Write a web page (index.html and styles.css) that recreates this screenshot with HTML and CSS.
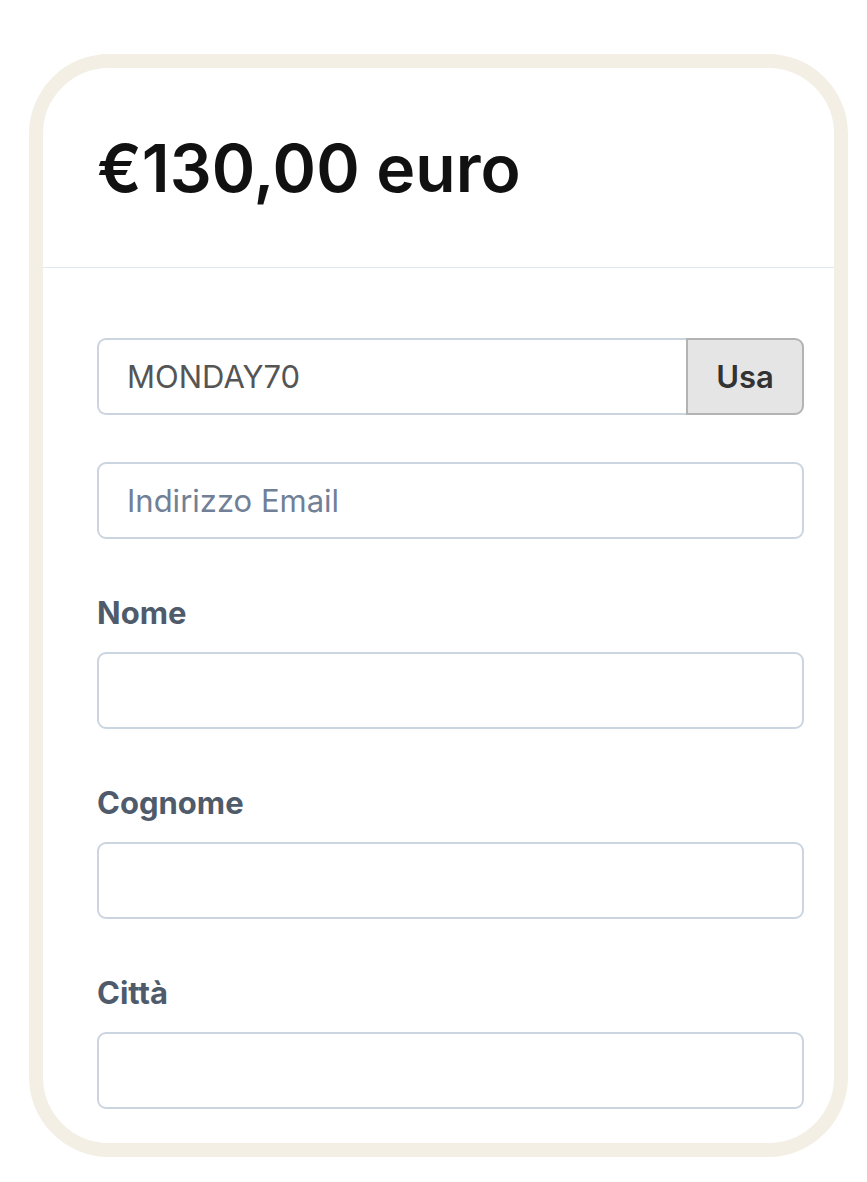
FILE: index.html
```html
<!DOCTYPE html>
<html lang="it">
<head>
<meta charset="utf-8">
<title>Pagamento</title>
<link rel="stylesheet" href="styles.css">
</head>
<body>
<div class="card">
  <div class="card-header">
    <h1 class="price">€130,00 euro</h1>
  </div>
  <div class="card-body">
    <div class="coupon">
      <input class="input coupon-input" type="text" value="MONDAY70">
      <button class="coupon-btn" type="button">Usa</button>
    </div>
    <input class="input email" type="email" placeholder="Indirizzo Email">
    <div class="field">
      <label class="label">Nome</label>
      <input class="input" type="text">
    </div>
    <div class="field">
      <label class="label">Cognome</label>
      <input class="input" type="text">
    </div>
    <div class="field">
      <label class="label">Città</label>
      <input class="input" type="text">
    </div>
  </div>
</div>
</body>
</html>
```
FILE: styles.css
```css
html, body {
  margin: 0;
  padding: 0;
  background: #ffffff;
}
body {
  font-family: Inter, "Liberation Sans", Arial, sans-serif;
  padding: 54px 0 0 29px;
}
.card {
  width: 819px;
  box-sizing: border-box;
  border: 14px solid #f3efe5;
  border-radius: 80px;
  background: #ffffff;
  overflow: hidden;
}
.card-header {
  height: 199px;
  border-bottom: 1px solid #e3e8ee;
  display: flex;
  align-items: center;
  padding-left: 54px;
  box-sizing: content-box;
}
.price {
  margin: 0;
  font-family: Inter, "Liberation Sans", Arial, sans-serif;
  font-size: 66px;
  line-height: 1;
  font-weight: 600;
  color: #111111;
  letter-spacing: 0;
}
.card-body {
  padding: 70px 30px 34px 54px;
  display: flex;
  flex-direction: column;
}
.input {
  display: block;
  box-sizing: border-box;
  width: 100%;
  height: 77px;
  margin: 0;
  padding: 0 28px;
  border: 2px solid #cbd5e0;
  border-radius: 9px;
  background: #ffffff;
  font-family: Inter, "Liberation Sans", Arial, sans-serif;
  font-size: 31px;
  color: #555555;
  outline: none;
}
.input::placeholder {
  color: #718096;
}
.coupon {
  display: flex;
}
.coupon-input {
  flex: 1;
  border-radius: 9px 0 0 9px;
  border-right: none;
}
.coupon-btn {
  width: 118px;
  height: 77px;
  box-sizing: border-box;
  border: 2px solid #b3b3b3;
  border-radius: 0 9px 9px 0;
  background: #e5e5e5;
  font-family: Inter, "Liberation Sans", Arial, sans-serif;
  font-size: 31px;
  font-weight: 600;
  color: #333333;
  padding: 0;
}
.email {
  margin-top: 47px;
}
.field {
  margin-top: 56px;
  display: flex;
  flex-direction: column;
}
.label {
  font-size: 31px;
  line-height: 36px;
  font-weight: 700;
  color: #4f5b6b;
  margin-bottom: 21px;
}
```
